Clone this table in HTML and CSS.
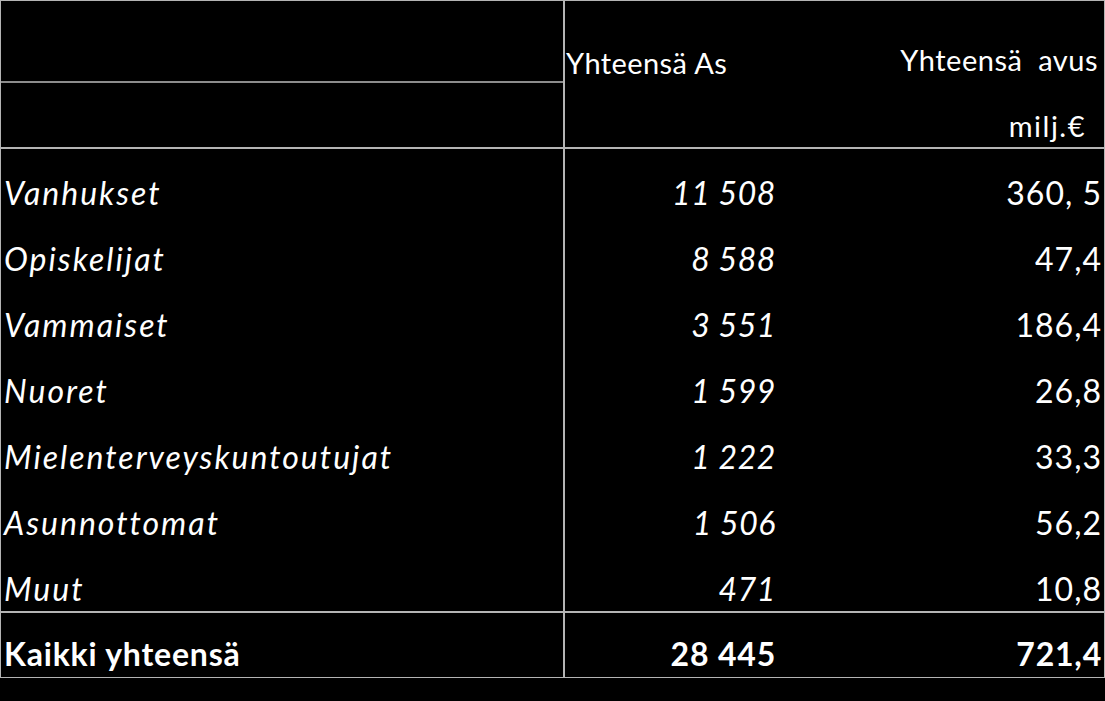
FILE: index.html
```html
<!DOCTYPE html>
<html lang="fi">
<head>
<meta charset="utf-8">
<title>Taulukko</title>
<link rel="stylesheet" href="styles.css">
</head>
<body>
<div class="table">
  <div class="cell head-a"></div>
  <div class="cell head-b"></div>
  <div class="cell head-as">Yhteensä As</div>
  <div class="cell head-avus"><span>Yhteensä&nbsp; avus</span><span class="milj">milj.€</span></div>

  <div class="cell name">Vanhukset</div><div class="cell num">11 508</div><div class="cell val">360, 5</div>
  <div class="cell name">Opiskelijat</div><div class="cell num">8 588</div><div class="cell val">47,4</div>
  <div class="cell name">Vammaiset</div><div class="cell num">3 551</div><div class="cell val">186,4</div>
  <div class="cell name">Nuoret</div><div class="cell num">1 599</div><div class="cell val">26,8</div>
  <div class="cell name">Mielenterveyskuntoutujat</div><div class="cell num">1 222</div><div class="cell val">33,3</div>
  <div class="cell name">Asunnottomat</div><div class="cell num">1 506</div><div class="cell val">56,2</div>
  <div class="cell name">Muut</div><div class="cell num">471</div><div class="cell val">10,8</div>

  <div class="cell name total">Kaikki yhteensä</div><div class="cell num total">28 445</div><div class="cell val total">721,4</div>
</div>
</body>
</html>
```

FILE: styles.css
```css
html, body {
  margin: 0;
  padding: 0;
  background: #000;
}

body {
  width: 1105px;
  height: 701px;
  overflow: hidden;
  color: #fff;
  font-family: Lato, "Open Sans", sans-serif;
}

.table {
  display: grid;
  grid-template-columns: 562px 220px 322px;
  grid-template-rows: 82px 66px repeat(7, 66px) 66px;
  width: 1105px;
  box-sizing: border-box;
  border: 1px solid #b4b4b4;
}

.cell {
  box-sizing: border-box;
  display: flex;
  align-items: flex-end;
  line-height: 1.2;
  font-size: 32px;
  padding-bottom: 3px;
}

.head-a {
  grid-column: 1;
  grid-row: 1;
  border-bottom: 2px solid #8c8c8c;
}

.head-b {
  grid-column: 1;
  grid-row: 2;
  border-bottom: 2px solid #b4b4b4;
}

.head-as {
  grid-column: 2;
  grid-row: 1 / 3;
  border-left: 2px solid #b4b4b4;
  border-bottom: 2px solid #b4b4b4;
  align-items: flex-start;
  font-size: 29px;
  letter-spacing: 0.4px;
  padding: 45px 0 0 1px;
}

.head-avus {
  grid-column: 3;
  grid-row: 1 / 3;
  border-bottom: 2px solid #b4b4b4;
  flex-direction: column;
  align-items: flex-end;
  justify-content: flex-start;
  font-size: 29px;
  letter-spacing: 0.5px;
  line-height: 66px;
  padding: 26px 7px 0 0;
}

.head-avus .milj {
  margin-right: 12px;
  letter-spacing: 1.5px;
}

.name {
  grid-column: 1;
  padding-left: 3px;
  font-style: italic;
  letter-spacing: 2px;
}

.num {
  grid-column: 2;
  justify-content: flex-end;
  border-left: 2px solid #b4b4b4;
  padding-right: 7px;
  font-style: italic;
  letter-spacing: 0.6px;
}

.val {
  grid-column: 3;
  justify-content: flex-end;
  padding-right: 3px;
  letter-spacing: 1px;
}

.total {
  font-style: normal;
  font-weight: 700;
  border-top: 2px solid #b4b4b4;
  padding-bottom: 4px;
  letter-spacing: 0.8px;
}

.name.total {
  letter-spacing: 0.8px;
}
```
